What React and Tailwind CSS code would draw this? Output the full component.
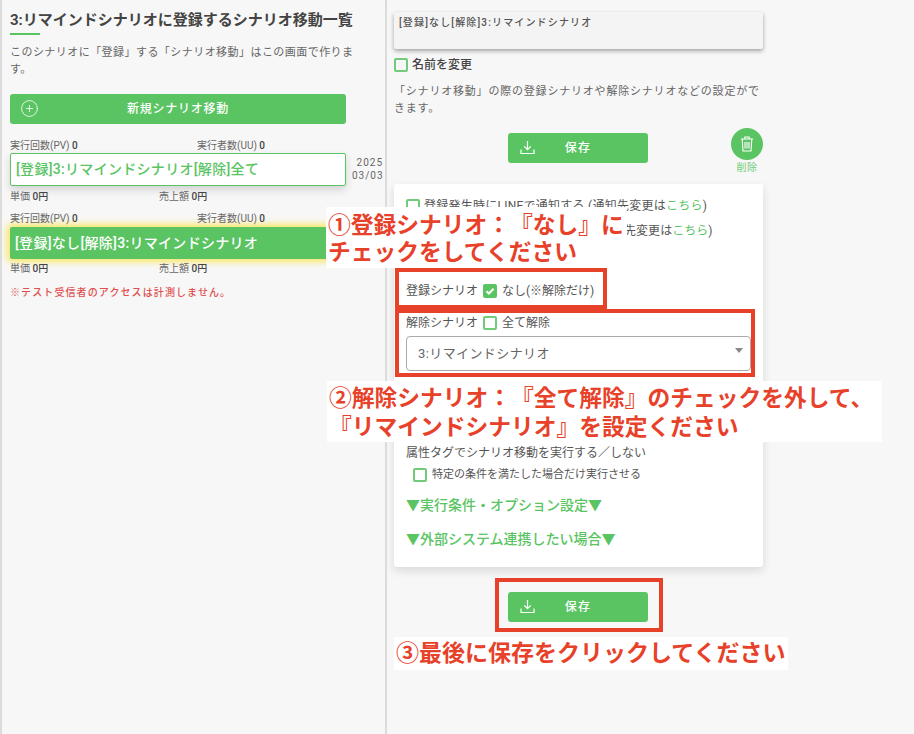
import { CirclePlus } from 'lucide-react'

const font = { fontFamily: 'Roboto, "Noto Sans CJK JP", sans-serif' }

function SaveButton() {
  return (
    <div className="relative w-[140px] h-[30px] bg-[#5ac463] rounded-[3px] flex items-center justify-center text-white text-[12px] font-medium tracking-[1.2px]">
      <svg className="absolute left-[12px] top-[7px]" width="15" height="15" viewBox="0 0 15 15" fill="none" stroke="#fff" strokeWidth="1.2">
        <path d="M7.5 1v8.5M4.2 6.4l3.3 3.3 3.3-3.3M1 9.5v4h13v-4" />
      </svg>
      保存
    </div>
  )
}

function Box({ checked }) {
  return checked ? (
    <span className="w-[14px] h-[14px] bg-[#5ac463] rounded-[2px] flex items-center justify-center shrink-0">
      <svg width="10" height="10" viewBox="0 0 10 10" fill="none" stroke="#fff" strokeWidth="2"><path d="M1.5 5.2l2.4 2.3 4.6-4.8" /></svg>
    </span>
  ) : (
    <span className="block w-[14px] h-[14px] border-2 border-[#70cc78] rounded-[2px] shrink-0" />
  )
}

function Stats({ top }) {
  return (
    <div className={`flex text-[10px] leading-[14px] text-[#666] ${top}`}>
      <div className="w-[187px]">実行回数(PV) <span className="font-medium text-[#444]">0</span></div>
      <div>実行者数(UU) <span className="font-medium text-[#444]">0</span></div>
    </div>
  )
}

function Price({ top }) {
  return (
    <div className={`flex text-[10px] leading-[14px] text-[#666] ${top}`}>
      <div className="w-[149px]">単価 <span className="font-medium text-[#444]">0円</span></div>
      <div>売上額 <span className="font-medium text-[#444]">0円</span></div>
    </div>
  )
}

export default function App() {
  return (
    <div style={font} className="relative w-[914px] h-[734px] bg-[#f7f7f7] flex overflow-hidden [text-spacing-trim:space-all]">
      {/* left column */}
      <div className="w-[387px] h-full border-x-2 border-[#dcdcdc] pl-[8px] shrink-0">
        <h1 className="mt-[12px] text-[15px] leading-[17px] font-bold text-[#444] whitespace-nowrap">3:リマインドシナリオに登録するシナリオ移動一覧</h1>
        <div className="w-[30px] h-[2px] bg-[#5ac463] mt-[4px]" />
        <p className="mt-[9px] w-[362px] text-[11px] leading-[17px] text-[#666] tracking-[0.45px]">このシナリオに「登録」する「シナリオ移動」はこの画面で作ります。</p>
        <div className="relative mt-[16px] w-[336px] h-[30px] bg-[#5ac463] rounded-[3px] flex items-center justify-center text-white text-[12px] font-medium tracking-[0.75px]">
          <CirclePlus className="absolute left-[10px] top-[5px]" size={19} strokeWidth={1} color="#fff" />
          新規シナリオ移動
        </div>

        <Stats top="mt-[15px]" />
        <div className="flex">
          <div className="w-[336px] h-[33px] bg-white border border-[#5ac463] rounded-[2px] shadow-[0_4px_8px_rgba(0,0,0,0.15)] flex items-center pl-[5px] text-[14px] font-medium text-[#5ac463] tracking-[0.3px]">[登録]3:リマインドシナリオ[解除]全て</div>
          <div className="ml-[6px] text-[10px] leading-[13px] text-[#666] tracking-[1px] text-right w-[31px] pt-[3px]">2025<br />03/03</div>
        </div>
        <Price top="mt-[4px]" />
        <Stats top="mt-[8px]" />
        <div className="w-[336px] h-[32px] mt-[1px] bg-[#5ac463] rounded-[2px] shadow-[0_0_6px_3px_rgba(250,230,90,0.9)] flex items-center pl-[5px] text-[14px] font-medium text-white tracking-[0.3px]">[登録]なし[解除]3:リマインドシナリオ</div>
        <Price top="mt-[3px]" />
        <p className="mt-[10px] text-[10px] leading-[14px] font-medium text-[#e0504f] tracking-[1.1px] whitespace-nowrap">※テスト受信者のアクセスは計測しません。</p>
      </div>

      {/* right column */}
      <div className="pl-[7px] w-[376px] shrink-0">
        <div className="mt-[12px] w-[369px] h-[37px] bg-[#f4f4f4] rounded-[2px] shadow-[0_2px_4px_rgba(0,0,0,0.35)] pl-[5px] pt-[4px] text-[10px] leading-[14px] font-medium text-[#555] tracking-[1.15px]">[登録]なし[解除]3:リマインドシナリオ</div>
        <div className="mt-[7px] flex items-center gap-[4px] text-[12px] font-medium text-[#444]">
          <Box />名前を変更
        </div>
        <p className="mt-[9px] w-[369px] text-[11px] leading-[17px] text-[#666] tracking-[0.8px]">「シナリオ移動」の際の登録シナリオや解除シナリオなどの設定ができます。</p>

        <div className="relative mt-[16px] h-[51px] pl-[114px]">
          <SaveButton />
          <div className="absolute right-[0px] top-[-5px] w-[32px] flex flex-col items-center">
            <div className="w-[32px] h-[32px] rounded-full bg-[#5ac463] flex items-center justify-center">
              <svg width="14" height="16" viewBox="0 0 14 16" fill="none" stroke="#fff" strokeWidth="1.1">
                <path d="M1 3h12M4.8 3V1h4.4v2M2.2 3l.8 12h8l.8-12M5 6v6.5M7 6v6.5M9 6v6.5" />
              </svg>
            </div>
            <span className="text-[10px] leading-[14px] text-[#70cc78] tracking-[0.5px] mt-[1px] whitespace-nowrap">削除</span>
          </div>
        </div>

        <div className="w-[369px] h-[383px] bg-white rounded-[3px] shadow-[0_4px_10px_rgba(0,0,0,0.12)] pt-[15px] pl-[12px] text-[#555]">
          <div className="flex items-center gap-[4px] text-[12px] leading-[14px] tracking-[0.25px] whitespace-nowrap">
            <Box /><span>登録発生時にLINEで通知する (通知先変更は<span className="text-[#5ac463]">こちら</span>)</span>
          </div>
          <div className="flex items-center gap-[4px] mt-[11px] text-[12px] leading-[14px] tracking-[0.05px] whitespace-nowrap">
            <Box /><span>解除発生時にメールで通知する (通知先変更は<span className="text-[#5ac463]">こちら</span>)</span>
          </div>

          <div className="mt-[46px] flex items-center gap-[5px] text-[12px] leading-[14px]">
            登録シナリオ<Box checked />なし(※解除だけ)
          </div>
          <div className="mt-[18px] flex items-center gap-[5px] text-[12px] leading-[14px]">
            解除シナリオ<Box />全て解除
          </div>
          <div className="relative mt-[6px] w-[345px] h-[35px] border border-[#aaa] rounded-[4px] flex items-center pl-[11px] text-[13px] text-[#666] tracking-[0.4px]">
            3:リマインドシナリオ
            <span className="absolute right-[7px] top-[11px] w-0 h-0 border-x-[4px] border-x-transparent border-t-[5px] border-t-[#888]" />
          </div>

          <div className="mt-[75px] text-[12px] leading-[14px]">属性タグでシナリオ移動を実行する／しない</div>
          <div className="mt-[8px] ml-[7px] flex items-center gap-[5px] text-[11px] leading-[14px]">
            <Box />特定の条件を満たした場合だけ実行させる
          </div>
          <div className="mt-[14px] text-[14px] leading-[18px] font-medium text-[#5ac463]">▼実行条件・オプション設定▼</div>
          <div className="mt-[16px] text-[14px] leading-[18px] font-medium text-[#5ac463]">▼外部システム連携したい場合▼</div>
        </div>

        <div className="mt-[25px] pl-[114px]"><SaveButton /></div>
      </div>

      {/* annotations over the screenshot */}
      <div className="absolute left-[326px] top-[207px] w-[301px] h-[61px] bg-white pl-[2px] pt-[5px] text-[22.75px] leading-[27px] font-bold text-[#e8412a] whitespace-nowrap">
        ①登録シナリオ：『なし』に<br />チェックをしてください
      </div>
      <div className="absolute left-[395px] top-[268px] w-[212px] h-[41px] border-[4px] border-[#e8412a]" />
      <div className="absolute left-[395px] top-[309px] w-[360px] h-[68px] border-[4px] border-[#e8412a]" />
      <div className="absolute left-[327px] top-[381px] w-[555px] h-[61px] bg-white pl-[2px] pt-[3px] text-[22.75px] leading-[29px] font-bold text-[#e8412a] whitespace-nowrap">
        ②解除シナリオ：『全て解除』のチェックを外して、<br />『リマインドシナリオ』を設定ください
      </div>
      <div className="absolute left-[495px] top-[578px] w-[168px] h-[54px] border-[4px] border-[#e8412a]" />
      <div className="absolute left-[394px] top-[637px] w-[394px] h-[33px] bg-white pl-[2px] text-[23px] leading-[33px] font-bold text-[#e8412a] whitespace-nowrap">
        ③最後に保存をクリックしてください
      </div>
    </div>
  )
}
